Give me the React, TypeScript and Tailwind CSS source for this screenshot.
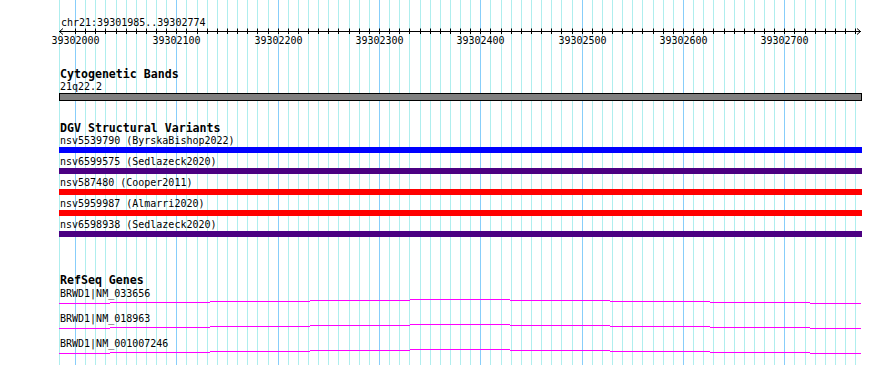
import React from "react";

const X0 = 75;
const PX = 1.01333;
const bpToX = (bp: number) => X0 + (bp - 39302000) * PX;

const gridBps: number[] = [];
for (let bp = 39302000; bp <= 39302770; bp += 10) gridBps.push(bp);

const majorBps = [39302000, 39302100, 39302200, 39302300, 39302400, 39302500, 39302600, 39302700];

const variants = [
  { label: "nsv5539790 (ByrskaBishop2022)", color: "bg-[#0000ff]" },
  { label: "nsv6599575 (Sedlazeck2020)", color: "bg-[#4b0082]" },
  { label: "nsv587480 (Cooper2011)", color: "bg-[#ff0000]" },
  { label: "nsv5959987 (Almarri2020)", color: "bg-[#ff0000]" },
  { label: "nsv6598938 (Sedlazeck2020)", color: "bg-[#4b0082]" },
];

const genes = ["BRWD1|NM_033656", "BRWD1|NM_018963", "BRWD1|NM_001007246"];

// gene line segments: [x start, x end, level offset]
const segs: [number, number, number][] = [
  [59, 110, 4],
  [110, 210, 3],
  [210, 310, 2],
  [310, 410, 1],
  [410, 510, 0],
  [510, 610, 1],
  [610, 710, 2],
  [710, 810, 3],
  [810, 861, 4],
];

function Grid() {
  return (
    <svg className="absolute left-0 top-0" width={890} height={365}>
      <line x1={59.5} x2={59.5} y1={0} y2={365} stroke="#afeeee" strokeWidth={1} />
      {gridBps.map((bp) => {
        const x = Math.round(bpToX(bp)) + 0.5;
        const major = bp % 100 === 0;
        return (
          <line
            key={bp}
            x1={x}
            x2={x}
            y1={0}
            y2={365}
            stroke={major ? "#87cefa" : "#afeeee"}
            strokeWidth={1}
          />
        );
      })}
    </svg>
  );
}

function Ruler() {
  return (
    <svg width={890} height={40} className="block -ml-[59px]">
      <line x1={59} x2={861} y1={3.5} y2={3.5} stroke="#000" strokeWidth={1} />
      <polyline points="63,0.5 59.5,3.5 63,6.5" fill="none" stroke="#000" strokeWidth={1} />
      <polyline points="857,0.5 860.5,3.5 857,6.5" fill="none" stroke="#000" strokeWidth={1} />
      {gridBps.map((bp) => {
        const x = Math.round(bpToX(bp)) + 0.5;
        return <line key={bp} x1={x} x2={x} y1={0.5} y2={6} stroke="#000" strokeWidth={1} />;
      })}
      {majorBps.map((bp) => (
        <text
          key={bp}
          x={Math.round(bpToX(bp)) + 0.5}
          y={16}
          textAnchor="middle"
          fontFamily="'DejaVu Sans Mono', monospace"
          fontSize={10}
          fill="#000"
        >
          {bp}
        </text>
      ))}
    </svg>
  );
}

function GeneLine() {
  return (
    <svg width={803} height={14} className="block">
      {segs.map(([a, b, lvl], i) => (
        <rect key={i} x={a - 59} y={lvl} width={b - a} height={1} fill="#ff00ff" />
      ))}
    </svg>
  );
}

export default function App() {
  return (
    <div className="relative w-[890px] h-[365px] overflow-hidden bg-white text-black font-['DejaVu_Sans_Mono',monospace]">
      <Grid />
      <div className="relative ml-[59px] w-[803px] flex flex-col">
        <div className="mt-[17px] pl-[2px] text-[10px] leading-[11px] whitespace-pre">chr21:39301985..39302774</div>
        <Ruler />

        <div className="pl-[1px] text-[11.6px] leading-[13px] font-bold whitespace-pre">Cytogenetic Bands</div>
        <div className="pl-[1px] text-[10px] leading-[11px] whitespace-pre">21q22.2</div>
        <div className="mt-[1px] h-[8px] border border-black bg-[#808080]" />

        <div className="mt-[21px] pl-[1px] text-[11.6px] leading-[13px] font-bold whitespace-pre">DGV Structural Variants</div>
        <div className="flex flex-col">
          {variants.map((v) => (
            <div key={v.label} className="flex flex-col mb-[3px]">
              <div className="pl-[1px] text-[10px] leading-[11px] whitespace-pre">{v.label}</div>
              <div className={`mt-[1px] h-[6px] ${v.color}`} />
            </div>
          ))}
        </div>

        <div className="mt-[34px] pl-[1px] text-[11.6px] leading-[13px] font-bold whitespace-pre">RefSeq Genes</div>
        <div className="mt-[1px] flex flex-col">
          {genes.map((g) => (
            <div key={g} className="flex flex-col">
              <div className="pl-[1px] text-[10px] leading-[11px] whitespace-pre">{g}</div>
              <GeneLine />
            </div>
          ))}
        </div>
      </div>
    </div>
  );
}
